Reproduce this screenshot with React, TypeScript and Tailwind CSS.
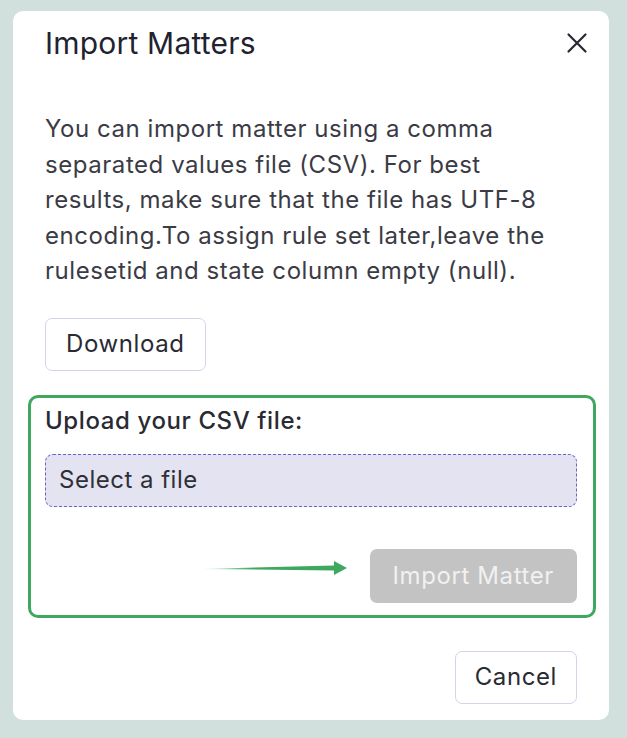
export default function App() {
  return (
    <div className="flex min-h-[738px] w-full justify-center bg-[#d1e0dd] pt-[11px] pl-[13px] pr-[18px] pb-[19px]" style={{fontFamily: "Inter, 'Noto Sans', sans-serif"}}>
      <div className="flex w-full flex-col rounded-[10px] bg-white px-[32px] pt-[14px] pb-[16px]">
        <div className="flex items-center justify-between">
          <h1 className="text-[30px] leading-[36px] tracking-[0.2px] text-[#1f2230]">Import Matters</h1>
          <button className="mr-[-17px] flex h-[34px] w-[34px] items-center justify-center text-[#262833]">
            <svg width="24" height="24" viewBox="0 0 24 24" fill="none" stroke="currentColor" strokeWidth="2.2" strokeLinecap="round">
              <path d="M3.5 3.5 L20.5 20.5 M20.5 3.5 L3.5 20.5" />
            </svg>
          </button>
        </div>
        <p className="mt-[50px] w-[514px] text-[24px] leading-[35.5px] tracking-[0.55px] text-[#3b3b45]">
          You can import matter using a comma separated values file (CSV). For best results, make sure that the file has UTF-8 encoding.To assign rule set later,leave the rulesetid and state column empty (null).
        </p>
        <div className="mt-[29px]">
          <button className="h-[53px] rounded-[7px] border border-[#d6d3e6] bg-white px-[20px] text-[24px] tracking-[0.6px] text-[#2a2a33]">Download</button>
        </div>
        <div className="mt-[24px] ml-[-17px] mr-[-19px] rounded-[10px] border-[3px] border-[#3ea85f] pl-[14px] pr-[16px] pt-[6px] pb-[12px]">
          <div className="text-[24px] leading-[34px] font-medium tracking-[0.6px] text-[#2a2a33]">Upload your CSV file:</div>
          <div className="mt-[16px] flex h-[53px] items-center rounded-[8px] border-[1.5px] border-dashed border-[#6a61c9] bg-[#e4e3f1] px-[13px] text-[24px] tracking-[0.5px] text-[#2f2f38]">
            Select a file
          </div>
          <div className="mt-[42px] flex items-start justify-end gap-[23px]">
            <svg width="145" height="54" viewBox="0 0 145 54">
              <defs>
                <linearGradient id="fade" x1="0" x2="1" y1="0" y2="0">
                  <stop offset="0" stopColor="#3ea85f" stopOpacity="0.15" />
                  <stop offset="0.35" stopColor="#3ea85f" stopOpacity="1" />
                </linearGradient>
              </defs>
              <path d="M0 20 L132 16.5 L132 12 L145 19 L132 26 L132 21.5 Z" fill="url(#fade)" />
            </svg>
            <button className="h-[54px] rounded-[7px] bg-[#c3c3c3] px-[23px] text-[24px] tracking-[0.6px] text-[#f1f1f1]">Import Matter</button>
          </div>
        </div>
        <div className="mt-[33px] flex justify-end">
          <button className="h-[53px] rounded-[7px] border border-[#d6d3e6] bg-white px-[19px] text-[24px] tracking-[0.6px] text-[#2a2a33]">Cancel</button>
        </div>
      </div>
    </div>
  );
}
